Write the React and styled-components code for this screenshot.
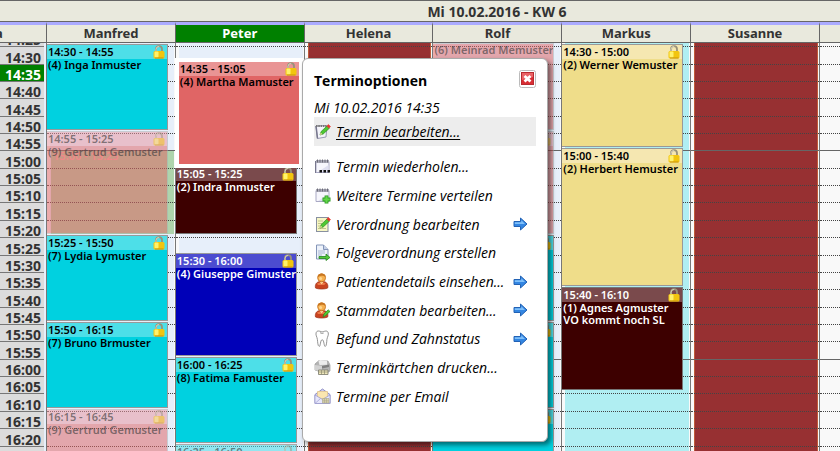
import React from "react";
import styled, { createGlobalStyle, css } from "styled-components";

const GlobalStyle = createGlobalStyle`
  * { box-sizing: border-box; }
  body { margin: 0; overflow: hidden; background: #f9f9f9; font-family: "Noto Sans", "Open Sans", sans-serif; }
  button { font: inherit; color: inherit; border: 0; padding: 0; background: none; cursor: pointer; }
`;

const SLOTS = [18, 17, 17, 18, 17, 17, 18, 17, 17, 18, 17, 18, 17, 17, 18, 17, 17, 18, 17, 17, 18, 17, 18, 17];
const TRACKS = "1px " + SLOTS.map((s) => s + "px").join(" ");
const START = 14 * 60 + 30;

const toRow = (time) => {
  const [h, m] = time.split(":").map(Number);
  return Math.max(1, (h * 60 + m - START) / 5 + 2);
};
const toTime = (i) => {
  const t = START + i * 5;
  return Math.floor(t / 60) + ":" + String(t % 60).padStart(2, "0");
};

const Page = styled.main`
  position: relative;
  height: 100vh;
  overflow: hidden;
  display: flex;
  flex-direction: column;
`;

const DayTitle = styled.h1`
  margin: 0;
  height: 21px;
  flex: none;
  padding-left: 154px;
  border-top: 1px solid #666;
  background: #e9e9dd;
  color: #333;
  font-size: 14px;
  line-height: 22px;
  font-weight: 700;
  text-align: center;
`;

const columnsLayout = css`
  display: grid;
  grid-template-columns: 46px repeat(6, minmax(0, 1fr)) 21px;
`;

const HeaderRow = styled.div`
  ${columnsLayout}
  flex: none;
  height: 22px;
  border-top: 1px solid #666;
  border-bottom: 1px solid #666;
`;

const NameCell = styled.div`
  border-top: 3px solid #aaaaff;
  border-left: ${(p) => (p.$first ? "0" : "1px solid #666")};
  background: ${(p) => (p.$active ? "#008000" : "#e9e9dd")};
  background-clip: padding-box;
  color: ${(p) => (p.$active ? "#fff" : "#333")};
  font-size: 13px;
  line-height: 17px;
  font-weight: 700;
  text-align: ${(p) => (p.$first ? "left" : "center")};
  text-indent: ${(p) => (p.$first ? "-5px" : "0")};
`;

const Body = styled.div`
  ${columnsLayout}
  flex: 1;
  min-height: 0;
  overflow: hidden;
`;

const TimeColumn = styled.div`
  display: grid;
  align-content: start;
  grid-template-rows: 4px ${SLOTS.map((s) => s + "px").join(" ")};
  background: #dcdcdc;
  border-right: 2px solid #e7effa;
`;

const TimeLabel = styled.div`
  overflow: hidden;
  display: flex;
  align-items: flex-end;
  padding-left: 5px;
  border-bottom: 1px solid #777;
  background: ${(p) => (p.$active ? "#008000" : "#dcdcdc")};
  color: ${(p) => (p.$active ? "#fff" : "#333")};
  font-size: 14px;
  line-height: 13px;
  font-weight: 700;
`;

const DayColumn = styled.div`
  display: grid;
  align-content: start;
  grid-template-columns: minmax(0, 1fr);
  grid-template-rows: ${TRACKS};
  border-left: 1px solid #777;
  background: #f9f9f9;
  min-width: 0;
`;

const Zone = styled.div`
  grid-column: 1;
  grid-row: ${(p) => p.$from} / ${(p) => p.$to};
  margin: 0 1px 0 3px;
  background: ${(p) => p.$color};
  border: solid ${(p) => p.$edge || p.$color};
  border-width: 0 1px;
`;

const SlotLine = styled.div`
  grid-column: 1;
  grid-row: ${(p) => p.$row};
  height: 1px;
  margin-top: 2px;
  border-top: 1px ${(p) => (p.$hour ? "solid #666" : "dotted #444")};
`;

const KINDS = {
  cyan: ["#00d1e0", "#4ddfe8", "#000", "#999"],
  maroon: ["#3d0000", "#7a4a4c", "#fff", "#777"],
  blue: ["#0000b8", "#4c4cd0", "#fff", "#999"],
  yellow: ["#efdd8a", "#f5e7b1", "#000", "#999"],
  red: ["#e06565", "#e99494", "#000", "#fff"],
  pinkFaded: ["rgba(224,100,100,.52)", "rgba(233,150,160,.52)", "rgba(60,60,60,.62)", "rgba(170,170,170,.5)"],
  cyanFaded: ["rgba(0,209,224,.5)", "rgba(77,223,232,.55)", "rgba(60,60,60,.62)", "#aaa"],
};

const EventCard = styled.article`
  grid-column: 1;
  grid-row: ${(p) => p.$from} / ${(p) => p.$to};
  margin: 0 7px 1px 0;
  overflow: hidden;
  min-height: 0;
  display: flex;
  flex-direction: column;
  border: 1px solid ${(p) => KINDS[p.$kind][3]};
  border-left-width: 0;
  color: ${(p) => KINDS[p.$kind][2]};
  font-size: 11px;
  line-height: 12px;
  font-weight: 600;
  ${(p) =>
    p.$selected &&
    css`
      z-index: 1;
      margin: -4px 1px -2px -1px;
      border: 4px solid #fff;
    `}
`;

const EventHead = styled.header`
  flex: none;
  display: flex;
  justify-content: space-between;
  height: 14px;
  padding: 0 2px 0 1px;
  line-height: 14px;
  background: ${(p) => KINDS[p.$kind][1]};
  svg { flex: none; margin-left: auto; opacity: ${(p) => (p.$kind.endsWith("Faded") ? 0.5 : 1)}; }
`;

const EventText = styled.div`
  flex: 1;
  padding-left: 1px;
  white-space: pre;
  background: ${(p) => KINDS[p.$kind][0]};
`;

const Overlap = styled.div`
  grid-column: 1;
  grid-row: ${(p) => p.$from} / ${(p) => p.$to};
  margin: 2px 1px 1px 4px;
  padding: 0 2px;
  background: #aed4ac;
  color: #ffb0b0;
  font-size: 11px;
  line-height: 12px;
  font-weight: 600;
`;

const Menu = styled.section`
  position: absolute;
  left: 302px;
  top: 58px;
  z-index: 2;
  width: 246px;
  height: 384px;
  padding: 11px;
  border: 1px solid #aaa;
  border-radius: 6px;
  background: #fff;
  box-shadow: 3px 3px 5px rgba(0, 0, 0, 0.5);
  color: #000;
  font-family: "Open Sans", "Noto Sans", sans-serif;
  font-size: 14px;
`;

const MenuTop = styled.div`
  display: flex;
  justify-content: space-between;
  height: 26px;
`;

const MenuTitle = styled.h2`
  margin: 0;
  font-size: 14px;
  line-height: 22px;
`;

const CloseButton = styled.button`
  width: 17px;
  height: 18px;
  svg { display: block; }
`;

const MenuDate = styled.div`
  height: 21px;
  line-height: 24px;
  font-style: italic;
`;

const MenuList = styled.ul`
  list-style: none;
  margin: 6px 0 0;
  padding: 0;
  display: grid;
  grid-auto-rows: 29px 29px 28px;
`;

const MenuButton = styled.button`
  display: flex;
  align-items: center;
  gap: 4px;
  width: 100%;
  height: ${(p) => (p.$current ? "29px" : "100%")};
  font-style: italic;
  text-align: left;
  white-space: nowrap;
  background: ${(p) => (p.$current ? "#ededed" : "none")};
  text-decoration: ${(p) => (p.$current ? "underline" : "none")};
  text-underline-offset: 2px;
  svg { flex: none; }
`;

const MenuLabel = styled.span`
  flex: 1;
  min-width: 0;
`;

const ArrowSlot = styled.span`
  display: flex;
  margin-right: 8px;
`;

const Lock = () => (
  <svg width="12" height="14" viewBox="0 0 12 14" aria-hidden="true">
    <path d="M3 7V4.200a3 3 0 0 1 6 0V7" fill="none" stroke="#98927a" strokeWidth="1.800" />
    <path d="M3 7V4.200a3 3 0 0 1 3.200-2.700" fill="none" stroke="#e8e4cc" strokeWidth=".8" />
    <rect x=".5" y="6" width="11" height="7.500" rx="1.500" fill="#f2c50e" />
    <rect x="1.500" y="6.500" width="4" height="6" rx="1" fill="#fff26a" />
    <path d="M2 13h8.500" stroke="#c8930c" />
  </svg>
);

const Arrow = () => (
  <svg width="15" height="14" viewBox="0 0 15 14" aria-hidden="true">
    <path d="M1 4.500h6.500v-3.500l6.500 6-6.500 6V9.500H1z" fill="#3386e2" stroke="#2262b5" />
    <path d="M1.800 5.300h6.500V3.200L12 7H1.800z" fill="#7fc0fa" />
  </svg>
);

const Close = () => (
  <svg width="17" height="18" viewBox="0 0 17 18" aria-hidden="true">
    <rect x=".5" y=".5" width="16" height="17" rx="2" fill="#fff" stroke="#bbb" />
    <rect x="2.500" y="2.500" width="12" height="12" fill="#d92e34" stroke="#b82a30" />
    <path d="M3 3h11v4L3 10z" fill="#ea6265" />
    <path d="m5.500 6 6 5.500m0-5.500-6 5.500" stroke="#fff" strokeWidth="2.800" />
  </svg>
);

const Sheet = () => (
  <>
    <path d="M2 3.500h13v11H2z" fill="#f6f6fc" stroke="#a9a9c4" />
    <path d="M2 2h13v3H2z" fill="#aaaab8" />
    <path d="M3.500 1.500v3m2.500-3v3m2.500-3v3m2.500-3v3m2.500-3v3" stroke="#6c6c78" />
    <path d="M4 14 14.500 7v7z" fill="#dfdff0" />
  </>
);

const Person = () => (
  <>
    <path d="M1.500 15c-.8-3.600 1.200-6 4-6.400h4.200c3 .4 4.800 2.800 4 6.400-2.500 1.400-9.700 1.400-12.200 0z" fill="#c94420" stroke="#9c3018" strokeWidth=".7" />
    <path d="M3 10.500c2-1.500 7-1.500 9 0l-2 1.500H4z" fill="#ec7a48" />
    <path d="m6 9 1.600 2.200L9.300 9z" fill="#ffe0a0" />
    <circle cx="7.600" cy="4.800" r="4" fill="#f5b04f" stroke="#c06a18" strokeWidth=".7" />
    <path d="M3.600 4.300c0-5 8-5 8 0-2-1.800-5-2-8 0z" fill="#c87620" />
    <circle cx="6.600" cy="5.600" r="1.500" fill="#ffd68e" />
  </>
);

const Pencil = () => (
  <>
    <path d="m6 12 1-3.300L13 3l2.400 2.200L9.200 11z" fill="#4fc832" stroke="#278a20" strokeWidth=".7" />
    <path d="m12.800 3 1.600-1.500 2.100 2L15 5.200z" fill="#e63a30" stroke="#e63a30" strokeWidth=".6" />
    <path d="m6 12 .7-2.400 1.700 1.600z" fill="#f4dca0" />
  </>
);

const ICONS = {
  edit: (
    <>
      <path d="M2 3 13 2.500l-1 11.500-8.500 1.500z" fill="#f4f4fa" stroke="#9a9ab4" />
      <path d="m2 3 1.500 12.500" stroke="#77778d" strokeWidth="1.500" />
      <path d="M2 3h10" stroke="#777" strokeWidth="2.200" strokeDasharray="1.500 .8" />
      <Pencil />
    </>
  ),
  repeat: (
    <>
      <Sheet />
      <path d="M1.500 3v12" stroke="#77778d" />
      <path d="M5.500 12h2.500v2.500H5.500zm4 0H12v2.500H9.500zm4 0H16v2.500h-2.500z" fill="#111" />
    </>
  ),
  add: (
    <>
      <Sheet />
      <path d="M12.500 8.500v8M8.500 12.500h8" stroke="#2c9c22" strokeWidth="3.800" />
      <path d="M12.500 9.300v6.400M9.300 12.500h6.400" stroke="#62d648" strokeWidth="2.200" />
    </>
  ),
  order: (
    <>
      <rect x="2.500" y="1.500" width="11.500" height="14" fill="#f7f6c4" stroke="#8890a0" />
      <path d="M4 5h5M4 7.500h4M4 10h2M4 12.500h8" stroke="#c2c58c" />
      <Pencil />
    </>
  ),
  follow: (
    <>
      <path d="M2.500 1h7L14 5.500V15H2.500z" fill="#edf2fa" stroke="#8495b8" />
      <path d="M9.500 1v4.500H14" fill="#c5d1e7" stroke="#8495b8" />
      <path d="M4 7h7M4 9h7M4 11h4" stroke="#a9b7d4" />
      <path d="M5 12.500h7v-2.500l4 3.500-4 3v-2H5z" fill="#52c83c" stroke="#23851d" strokeWidth=".8" />
    </>
  ),
  patient: <Person />,
  master: (
    <>
      <Person />
      <path d="m9 15 1-3.200 4.200-4L16 9.500l-4.300 4z" fill="#4fc832" stroke="#278a20" strokeWidth=".7" />
    </>
  ),
  tooth: (
    <path
      d="M2.300 2.200C3.800-.2 6.500 1.800 8.300 1.800S12.500-.2 14 2.200c1.200 2.600-.8 4.800-1.100 7.300-.2 2.700-.4 6.500-1.600 6.900-1.500.2-1.100-6.600-3.100-6.700-2 .1-1.600 6.900-3 6.700C3.800 16 3.700 12.200 3.400 9.500 3.200 7 1.100 4.800 2.300 2.200zM6 2.600c1 .8 2.600 1 3.600.5"
      fill="#fff"
      stroke="#777"
      strokeWidth=".8"
    />
  ),
  print: (
    <>
      <path d="M1 5 5 1.500l9 .5 2 4v6l-4 2.500L1 11z" fill="#b4b4b4" stroke="#999" strokeWidth=".7" />
      <path d="M4.500 2 6 1l7 .8v4L5.500 6z" fill="#ececec" />
      <path d="m1 6 7 1v6l-7-2z" fill="#d2d2d2" />
      <path d="m8 7 7-1.500V8l-7 1.500z" fill="#7f7f7f" />
      <path d="M4.500 11h9.500v4.500H4.500z" fill="#eee7bb" stroke="#77776a" strokeWidth=".8" />
      <path d="M7.500 11v4.500m3-4.500v4.500M4.500 13H14" stroke="#8c8970" strokeWidth=".7" />
    </>
  ),
  mail: (
    <>
      <path d="M1 6.500 8.500 1 16 6.500V15.500H1z" fill="#cdcdf2" stroke="#8f8fc4" />
      <path d="M3.500 3.500h10V9L8.500 11l-5-2z" fill="#fbe6b0" stroke="#e4c184" strokeWidth=".7" />
      <path d="m1 7 7.500 4.500L16 7v8.500H1z" fill="#e6e6fb" stroke="#9a9acc" strokeWidth=".7" />
      <path d="m1 15.500 5.500-5m9.500 5-5.500-5" stroke="#a5a5d4" strokeWidth=".8" />
      <path d="M8.500 10.500H15V15H8.500z" fill="#d9d3ad" stroke="#aaa68c" strokeWidth=".6" />
      <path d="M10.500 10.500V15m2-4.500V15m-4-2.200H15" stroke="#aaa68c" strokeWidth=".6" />
    </>
  ),
};

const MENU_ITEMS = [
  { icon: "repeat", label: "Termin wiederholen..." },
  { icon: "add", label: "Weitere Termine verteilen" },
  { icon: "order", label: "Verordnung bearbeiten", sub: true },
  { icon: "follow", label: "Folgeverordnung erstellen" },
  { icon: "patient", label: "Patientendetails einsehen...", sub: true },
  { icon: "master", label: "Stammdaten bearbeiten...", sub: true },
  { icon: "tooth", label: "Befund und Zahnstatus", sub: true },
  { icon: "print", label: "Terminkärtchen drucken..." },
  { icon: "mail", label: "Termine per Email" },
];

const BLUE = "#e7effa";
const RED = { color: "#973032", edge: "#c05a38" };

const COLUMNS = [
  {
    name: "Manfred",
    zone: { color: BLUE },
    overlap: { from: "15:00", to: "15:25" },
    events: [
      ["14:30", "14:55", "(4) Inga Inmuster", "cyan"],
      ["14:55", "15:25", "(9) Gertrud Gemuster", "pinkFaded"],
      ["15:25", "15:50", "(7) Lydia Lymuster", "cyan"],
      ["15:50", "16:15", "(7) Bruno Brmuster", "cyan"],
      ["16:15", "16:45", "(9) Gertrud Gemuster", "pinkFaded"],
    ],
  },
  {
    name: "Peter",
    active: true,
    zone: { color: BLUE },
    events: [
      ["14:35", "15:05", "(4) Martha Mamuster", "red", true],
      ["15:05", "15:25", "(2) Indra Inmuster", "maroon"],
      ["15:30", "16:00", "(4) Giuseppe Gimuster", "blue"],
      ["16:00", "16:25", "(8) Fatima Famuster", "cyan"],
      ["16:25", "16:50", "", "cyanFaded"],
    ],
  },
  { name: "Helena", zone: RED, events: [] },
  {
    name: "Rolf",
    zone: { color: BLUE },
    covered: true,
    events: [
      [null, "14:55", "(6) Meinrad Memuster", "pinkFaded"],
      ["14:55", "15:25", "", "pinkFaded"],
      ["15:25", "15:50", "", "cyan"],
      ["15:50", "16:15", "", "cyan"],
      ["16:15", "16:40", "", "cyan"],
    ],
  },
  {
    name: "Markus",
    zone: { color: "#b0eef2" },
    events: [
      ["14:30", "15:00", "(2) Werner Wemuster", "yellow"],
      ["15:00", "15:40", "(2) Herbert Hemuster", "yellow"],
      ["15:40", "16:10", "(1) Agnes Agmuster\nVO kommt noch SL", "maroon"],
    ],
  },
  { name: "Susanne", zone: RED, events: [] },
  { name: "", events: [] },
];

const END_ROW = SLOTS.length + 2;

function Event({ data: [from, to, text, kind, selected], covered }) {
  return (
    <EventCard
      $kind={kind}
      $selected={selected}
      $from={from ? toRow(from) : 1}
      $to={Math.min(toRow(to), END_ROW)}
    >
      {from && (
        <EventHead $kind={kind}>
          {!covered && <time>{from + " - " + to}</time>}
          <Lock />
        </EventHead>
      )}
      <EventText $kind={kind}>{text}</EventText>
    </EventCard>
  );
}

function Column({ data }) {
  return (
    <DayColumn>
      {data.zone && <Zone $from={1} $to={END_ROW} $color={data.zone.color} $edge={data.zone.edge} />}
      {data.overlap && (
        <Overlap $from={toRow(data.overlap.from)} $to={toRow(data.overlap.to)}>
          {data.overlap.from + " - " + data.overlap.to}
        </Overlap>
      )}
      {SLOTS.map((_, i) => (
        <SlotLine key={i} $row={i + 2} $hour={i % 12 === 6} />
      ))}
      {data.events.map((e) => (
        <Event key={e[1]} data={e} covered={data.covered} />
      ))}
    </DayColumn>
  );
}

function MenuItem({ item, current }) {
  return (
    <MenuButton type="button" $current={current}>
      <svg width="18" height="17" viewBox="0 0 18 17" aria-hidden="true">
        {ICONS[item.icon]}
      </svg>
      <MenuLabel>{item.label}</MenuLabel>
      {item.sub && (
        <ArrowSlot>
          <Arrow />
        </ArrowSlot>
      )}
    </MenuButton>
  );
}

export default function App() {
  return (
    <Page>
      <GlobalStyle />
      <DayTitle>Mi 10.02.2016 - KW 6</DayTitle>
      <HeaderRow>
        <NameCell $first>a</NameCell>
        {COLUMNS.map((c) => (
          <NameCell key={c.name} $active={c.active}>
            {c.name}
          </NameCell>
        ))}
      </HeaderRow>
      <Body>
        <TimeColumn>
          <TimeLabel>14:25</TimeLabel>
          {SLOTS.map((_, i) => (
            <TimeLabel key={i} $active={i === 1}>
              {toTime(i)}
            </TimeLabel>
          ))}
        </TimeColumn>
        {COLUMNS.map((c) => (
          <Column key={c.name} data={c} />
        ))}
      </Body>
      <Menu aria-label="Terminoptionen">
        <MenuTop>
          <MenuTitle>Terminoptionen</MenuTitle>
          <CloseButton type="button" aria-label="Schließen">
            <Close />
          </CloseButton>
        </MenuTop>
        <MenuDate>Mi 10.02.2016 14:35</MenuDate>
        <MenuItem item={{ icon: "edit", label: "Termin bearbeiten..." }} current />
        <MenuList>
          {MENU_ITEMS.map((item) => (
            <li key={item.icon}>
              <MenuItem item={item} />
            </li>
          ))}
        </MenuList>
      </Menu>
    </Page>
  );
}
